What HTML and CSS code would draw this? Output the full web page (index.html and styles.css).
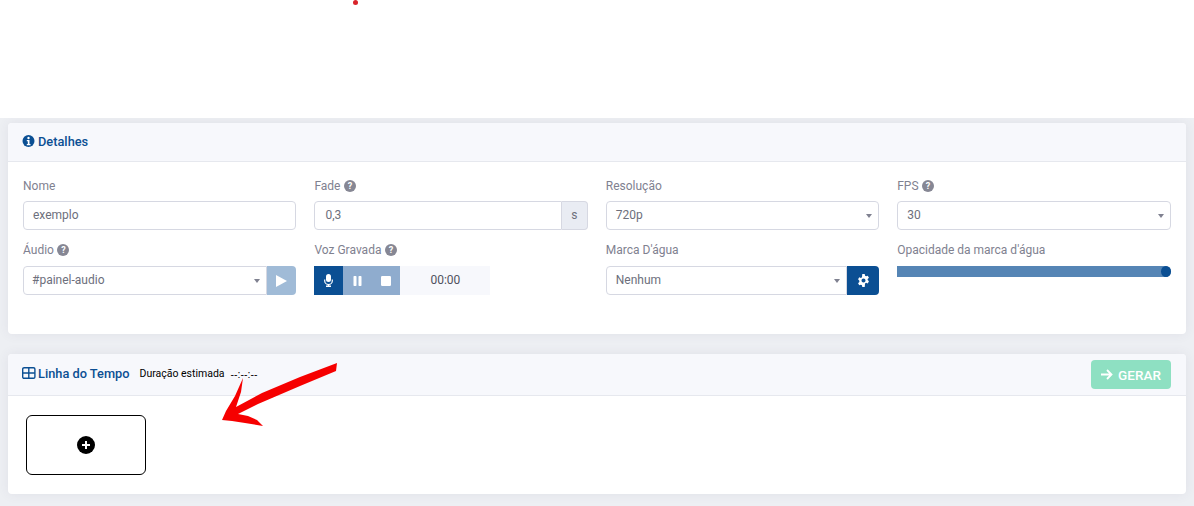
FILE: index.html
```html
<!DOCTYPE html>
<html lang="pt">
<head>
<meta charset="utf-8">
<title>Detalhes</title>
<link rel="stylesheet" href="styles.css">
</head>
<body>
<div class="top"><span class="dot"></span></div>
<main class="content">
  <section class="card details">
    <header class="card-head">
      <h2 class="title title-first">
        <svg class="ico-title" viewBox="0 0 14 14"><circle cx="6.500" cy="7" r="6" fill="#0b4f93"/><circle cx="6.500" cy="4" r="1.200" fill="#fff"/><path d="M4.800 6h2.700v4h1v1.200H4.800V10h1V7.200h-1z" fill="#fff"/></svg>
        Detalhes
      </h2>
    </header>
    <div class="card-body grid">
      <div class="field">
        <label class="lbl">Nome</label>
        <div class="ctl">exemplo</div>
      </div>
      <div class="field">
        <label class="lbl">Fade <span class="help">?</span></label>
        <div class="group">
          <div class="ctl ctl-num joined-r">0,3</div>
          <span class="addon">s</span>
        </div>
      </div>
      <div class="field">
        <label class="lbl">Resolução</label>
        <div class="ctl sel">720p<span class="caret"></span></div>
      </div>
      <div class="field">
        <label class="lbl">FPS <span class="help">?</span></label>
        <div class="ctl sel">30<span class="caret"></span></div>
      </div>

      <div class="field">
        <label class="lbl lbl-low">Áudio <span class="help">?</span></label>
        <div class="group">
          <div class="ctl sel low small joined-r">#painel-audio<span class="caret"></span></div>
          <button class="btn-play" type="button"><svg width="11" height="12" viewBox="0 0 11 12"><path d="M0 0l11 6-11 6z" fill="#fff"/></svg></button>
        </div>
      </div>
      <div class="field">
        <label class="lbl lbl-low">Voz Gravada <span class="help">?</span></label>
        <div class="rec">
          <button class="rec-btn rec-on" type="button"><svg width="9" height="13" viewBox="0 0 9 13"><rect x="2" y="0" width="5" height="8" rx="2.500" fill="#fff"/><path d="M.7 5.500v1.200a3.800 3.800 0 0 0 7.600 0V5.500" fill="none" stroke="#fff" stroke-width="1.200"/><path d="M3.800 10h1.400v1.500H7V13H2v-1.500h1.800z" fill="#fff"/></svg></button>
          <button class="rec-btn rec-off" type="button"><svg width="9" height="10" viewBox="0 0 9 10"><rect x="0.500" width="3" height="10" rx=".7" fill="#fff"/><rect x="5.500" width="3" height="10" rx=".7" fill="#fff"/></svg></button>
          <button class="rec-btn rec-off" type="button"><svg width="10" height="10" viewBox="0 0 10 10"><rect width="10" height="10" rx="1.200" fill="#fff"/></svg></button>
          <span class="rec-time">00:00</span>
        </div>
      </div>
      <div class="field">
        <label class="lbl lbl-low">Marca D'água</label>
        <div class="group">
          <div class="ctl sel low joined-r">Nenhum<span class="caret"></span></div>
          <button class="btn-gear" type="button"><svg width="13" height="13" viewBox="0 0 16 16"><path fill="#fff" fill-rule="evenodd" d="M6.500 0h3l.4 2.100 1.300.7 2-.8 1.500 2.600-1.600 1.400v1.500l1.600 1.500-1.500 2.600-2-.8-1.300.8L9.500 16h-3l-.4-2.100-1.300-.8-2 .8-1.500-2.600 1.600-1.500V8.300L1.300 6.600l1.500-2.600 2 .8 1.300-.7zM8 5.500a2.500 2.500 0 1 0 0 5 2.500 2.500 0 0 0 0-5z"/></svg></button>
        </div>
      </div>
      <div class="field">
        <label class="lbl lbl-low">Opacidade da marca d'água</label>
        <div class="slider"><span class="knob"></span></div>
      </div>
    </div>
  </section>

  <section class="card timeline">
    <header class="card-head head-row">
      <h2 class="title title-up">
        <svg class="ico-title" viewBox="0 0 14 12"><rect x=".7" y=".7" width="12.200" height="10.600" rx="1.400" fill="none" stroke="#0b4f93" stroke-width="1.400"/><path d="M.7 6h12.200M6.800 .7v10.600" stroke="#0b4f93" stroke-width="1.400" fill="none"/></svg>
        Linha do Tempo
      </h2>
      <span class="dur">Duração estimada</span>
      <span class="dur-val">--:--:--</span>
      <button class="btn-gerar" type="button">
        <svg width="12" height="11" viewBox="0 0 12 11"><path d="M0 5.500h10M6 1l4.500 4.500L6 10" fill="none" stroke="#fff" stroke-width="1.800"/></svg>
        GERAR
      </button>
    </header>
    <div class="tl-body">
      <button class="add" type="button"><svg width="18" height="18" viewBox="0 0 18 18"><circle cx="9" cy="9" r="9" fill="#000"/><path d="M9 5v8M5 9h8" stroke="#fff" stroke-width="2"/></svg></button>
    </div>
  </section>
</main>
<svg class="arrow" width="1194" height="506" viewBox="0 0 1194 506"><path fill="#f60000" d="M337 363L336 371 300 386 258 404 238 414 248 416 257 420 263 426 245 423 232 421 222 420 226 411 235 396 243 378 241 392 236 407 262 393 300 377z"/></svg>
</body>
</html>
```
FILE: styles.css
```css
* { box-sizing: border-box; }
html, body { margin: 0; padding: 0; }
body {
  width: 1194px;
  height: 506px;
  overflow: hidden;
  background: #edeff3;
  font-family: Roboto, "Liberation Sans", sans-serif;
  font-size: 12px;
  color: #6d6f7c;
  position: relative;
}
.top { height: 118px; background: #fff; position: relative; }
.dot {
  position: absolute;
  left: 353px;
  top: 0;
  width: 5px;
  height: 5px;
  border-radius: 50%;
  background: #d8232a;
}
.content { padding: 5px 8px 0; display: flex; flex-direction: column; gap: 20px; }
.card {
  background: #fff;
  border-radius: 4px;
  box-shadow: 0 0 12px rgba(82, 63, 105, .08);
  overflow: hidden;
}
.details { height: 211px; }
.timeline { height: 140px; }
.card-head {
  background: #f7f8fc;
  border-bottom: 1px solid #e6e8ee;
  height: 39px;
  padding: 0 15px;
  display: flex;
  align-items: center;
}
.head-row { height: 42px; }
.title {
  margin: 0 0 0 -1px;
  font-size: 12.800px;
  font-weight: 500;
  color: #0b4f93;
  display: flex;
  align-items: center;
  gap: 2px;
}
.title-first { margin-top: -2px; }
.title-up { margin-top: -3px; }
.ico-title { width: 14px; height: 14px; }
.card-body { padding: 15px 15px 0; }
.grid {
  display: grid;
  grid-template-columns: repeat(4, 273.4px);
  column-gap: 18px;
  row-gap: 12px;
}
.field { display: flex; flex-direction: column; }
.lbl {
  height: 24px;
  padding-top: 2px;
  line-height: 15px;
  color: #7f8190;
  display: flex;
  align-items: flex-start;
  gap: 3.500px;
}
.lbl-low { padding-top: 1px; }
.help {
  width: 12px;
  height: 12px;
  margin-top: .5px;
  border-radius: 50%;
  background: #868794;
  color: #fff;
  font-size: 9px;
  font-weight: 700;
  line-height: 12px;
  text-align: center;
}
.ctl {
  flex: 1;
  height: 29px;
  min-width: 0;
  border: 1px solid #d6d8e2;
  border-radius: 4px;
  background: #fff;
  padding: 0 9px;
  line-height: 26px;
  color: #6d6f7c;
  position: relative;
}
.ctl-num { padding-left: 10px; }
.sel { padding-left: 9px; }
.low { line-height: 27px; }
.small { padding-left: 8px; }
.joined-r { border-top-right-radius: 0; border-bottom-right-radius: 0; }
.caret {
  position: absolute;
  right: 6px;
  top: 12px;
  width: 0;
  height: 0;
  border-left: 3.500px solid transparent;
  border-right: 3.500px solid transparent;
  border-top: 4px solid #7f8190;
}
.group { display: flex; height: 29px; }
.addon {
  width: 26px;
  height: 29px;
  background: #e9ecf3;
  border: 1px solid #d6d8e2;
  border-left: 0;
  border-radius: 0 4px 4px 0;
  text-align: center;
  line-height: 27px;
  color: #6d6f7c;
}
button { border: 0; padding: 0; margin: 0; font: inherit; display: flex; align-items: center; justify-content: center; }
.btn-play {
  width: 29px;
  height: 29px;
  flex: none;
  background: #a0bbd7;
  border-radius: 0 4px 4px 0;
}
.btn-gear {
  width: 32px;
  height: 29px;
  flex: none;
  background: #0b4f93;
  border-radius: 0 4px 4px 0;
}
.rec { display: flex; height: 29px; width: 176px; }
.rec-btn { width: 28.500px; height: 29px; flex: none; }
.rec-on { background: #0b4f93; width: 29px; }
.rec-off { background: #8facce; }
.rec-time {
  flex: 1;
  background: #f7f8fc;
  text-align: center;
  line-height: 29px;
  color: #50525e;
}
.slider {
  height: 11px;
  background: #5585b5;
  position: relative;
  border-radius: 0 6px 6px 0;
}
.knob {
  position: absolute;
  right: 0;
  top: 0;
  width: 10px;
  height: 11px;
  border-radius: 50%;
  background: #0b4f93;
}
.dur { margin: -2px 0 0 10px; font-size: 10.500px; color: #000; }
.dur-val { margin: -2px 0 0 6px; font-family: "Liberation Sans", sans-serif; font-size: 10.500px; color: #000; }
.btn-gerar {
  margin-left: auto;
  width: 80px;
  height: 29px;
  background: #8ee0c2;
  color: #fff;
  font-size: 13.500px;
  font-weight: 500;
  border-radius: 4px;
  gap: 5px;
}
.tl-body { padding: 19px 18px; }
.add {
  width: 120px;
  height: 60px;
  background: #fff;
  border: 1px solid #000;
  border-radius: 6px;
}
.arrow { position: absolute; left: 0; top: 0; pointer-events: none; }
```
